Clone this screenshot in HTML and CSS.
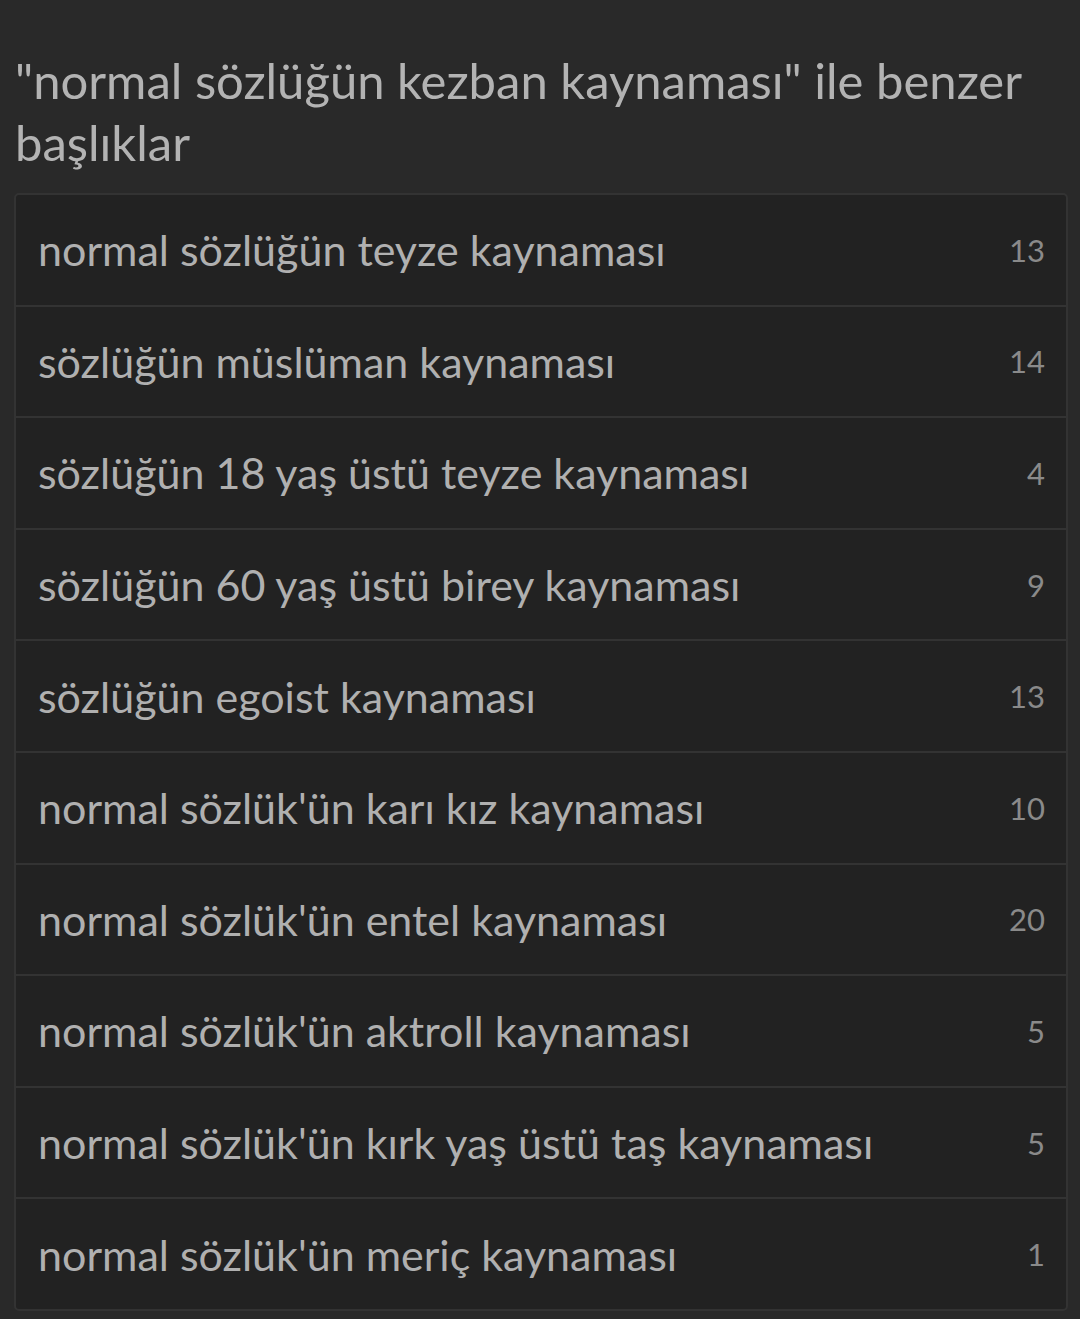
FILE: index.html
```html
<!DOCTYPE html>
<html lang="tr">
<head>
<meta charset="utf-8">
<link rel="stylesheet" href="styles.css">
</head>
<body>
<h1 class="title">"normal sözlüğün kezban kaynaması" ile benzer başlıklar</h1>
<ul class="list">
  <li class="row"><span class="name">normal sözlüğün teyze kaynaması</span><span class="count">13</span></li>
  <li class="row"><span class="name">sözlüğün müslüman kaynaması</span><span class="count">14</span></li>
  <li class="row"><span class="name">sözlüğün 18 yaş üstü teyze kaynaması</span><span class="count">4</span></li>
  <li class="row"><span class="name">sözlüğün 60 yaş üstü birey kaynaması</span><span class="count">9</span></li>
  <li class="row"><span class="name">sözlüğün egoist kaynaması</span><span class="count">13</span></li>
  <li class="row"><span class="name">normal sözlük'ün karı kız kaynaması</span><span class="count">10</span></li>
  <li class="row"><span class="name">normal sözlük'ün entel kaynaması</span><span class="count">20</span></li>
  <li class="row"><span class="name">normal sözlük'ün aktroll kaynaması</span><span class="count">5</span></li>
  <li class="row"><span class="name">normal sözlük'ün kırk yaş üstü taş kaynaması</span><span class="count">5</span></li>
  <li class="row"><span class="name">normal sözlük'ün meriç kaynaması</span><span class="count">1</span></li>
</ul>
</body>
</html>
```

FILE: styles.css
```css
html, body {
  margin: 0;
  padding: 0;
  background: #292929;
}
body {
  font-family: "Lato", "Open Sans", sans-serif;
  padding: 49px 12px 0 14px;
  box-sizing: border-box;
  width: 1080px;
  height: 1319px;
  overflow: hidden;
}
.title {
  margin: 0 0 20px 1px;
  font-weight: 400;
  font-size: 49px;
  line-height: 62px;
  color: #b3b3b3;
}
.list {
  list-style: none;
  margin: 0;
  padding: 0;
  background: #222222;
  border: 2px solid #333333;
  border-radius: 5px;
}
.row {
  display: flex;
  align-items: center;
  justify-content: space-between;
  height: 109.6px;
  padding: 0 21px 0 22px;
  border-bottom: 2px solid #333333;
}
.row:last-child {
  border-bottom: none;
}
.name {
  font-size: 43px;
  color: #b0b0b0;
}
.count {
  font-size: 31px;
  color: #8a8a8a;
}
```
